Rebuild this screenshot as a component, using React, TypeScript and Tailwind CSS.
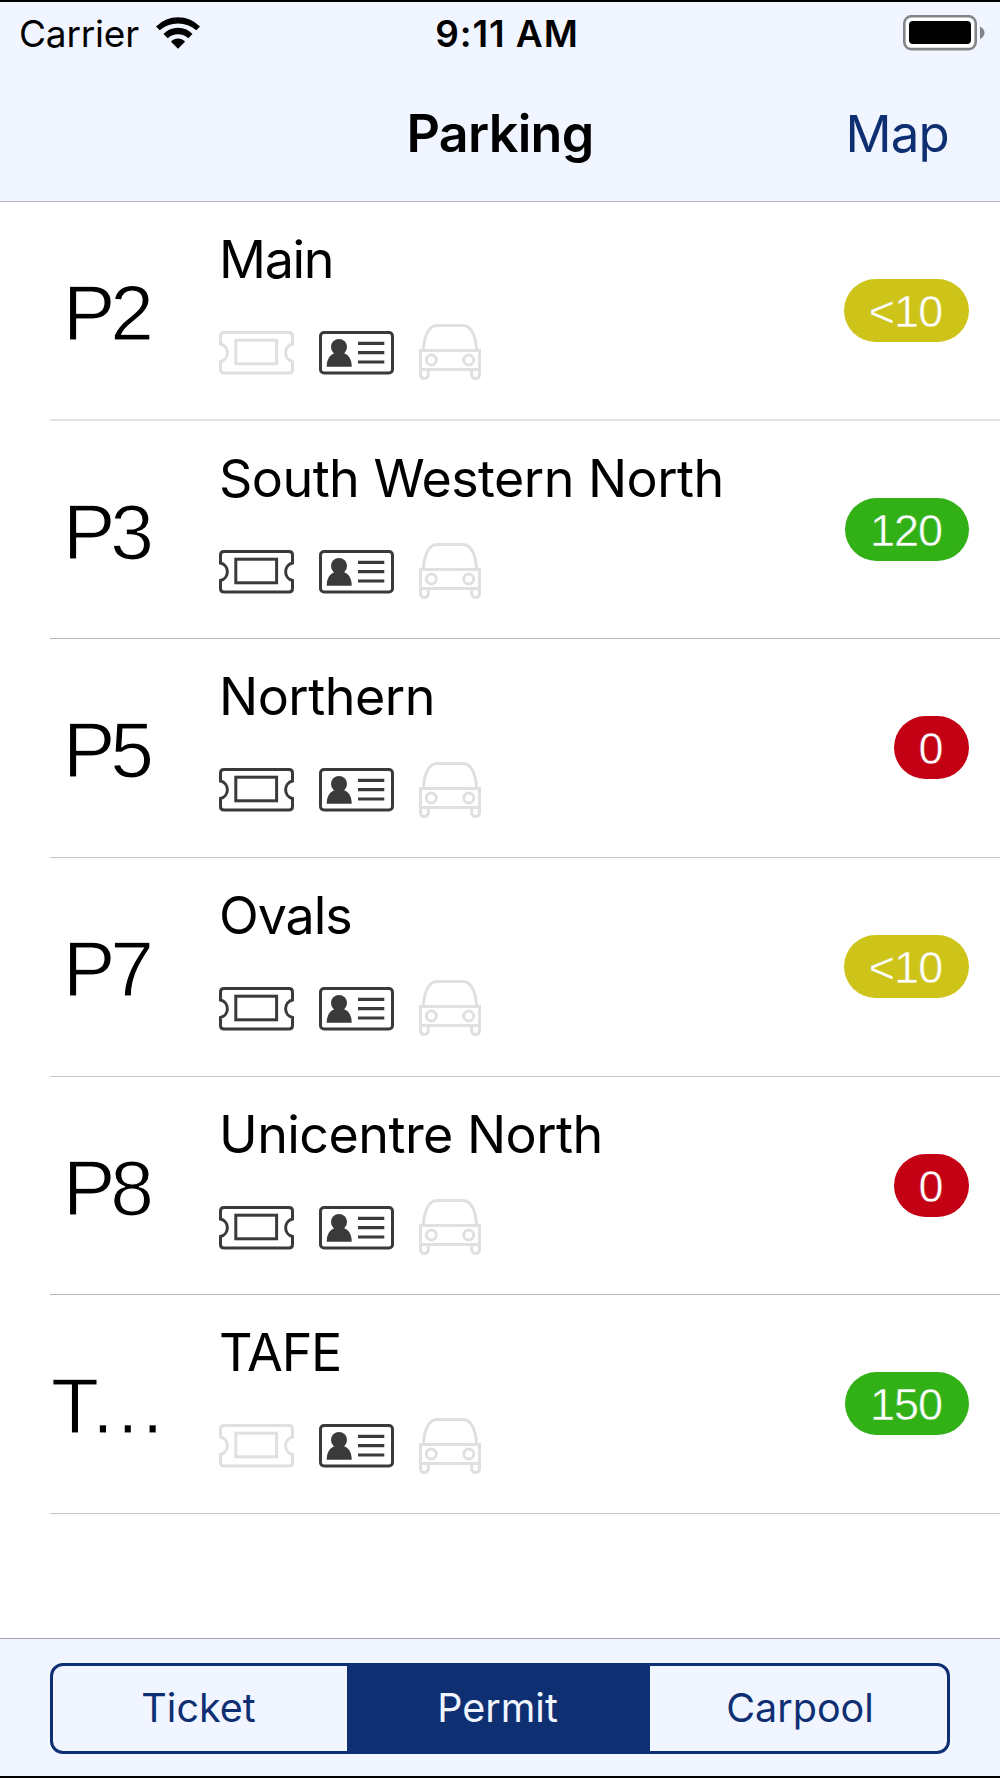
type Lot = {
  code: string;
  codeClass: string;
  name: string;
  nameClass: string;
  ticket: boolean;
  spaces: string;
  badgeClass: string;
  lineClass: string;
};

const YELLOW = "w-[125px] bg-[#cec318] [-webkit-text-stroke:0.5px_#cec318]";
const GREEN = "w-[124px] bg-[#32b117] [-webkit-text-stroke:0.5px_#32b117]";
const RED = "w-[75px] bg-[#c40014] [-webkit-text-stroke:0.5px_#c40014]";

const CENTERED = "pr-[3px] text-center tracking-[-5px]";
const CLIPPED = "pl-px text-left tracking-[-10.5px]";

const SOFT = "border-b-2 border-[#e2e2e3]";
const FINE = "border-b border-[#c6c6ca]";
const STRONG = "border-b border-[#b4b4b9]";

const lots: Lot[] = [
  { code: "P2", codeClass: CENTERED, name: "Main", nameClass: "tracking-[-1.3px]", ticket: false, spaces: "<10", badgeClass: YELLOW, lineClass: SOFT },
  { code: "P3", codeClass: CENTERED, name: "South Western North", nameClass: "tracking-[-0.55px]", ticket: true, spaces: "120", badgeClass: GREEN, lineClass: STRONG },
  { code: "P5", codeClass: CENTERED, name: "Northern", nameClass: "tracking-[-0.5px]", ticket: true, spaces: "0", badgeClass: RED, lineClass: FINE },
  { code: "P7", codeClass: CENTERED, name: "Ovals", nameClass: "tracking-[-1.1px]", ticket: true, spaces: "<10", badgeClass: YELLOW, lineClass: FINE },
  { code: "P8", codeClass: CENTERED, name: "Unicentre North", nameClass: "tracking-[-0.55px]", ticket: true, spaces: "0", badgeClass: RED, lineClass: STRONG },
  { code: "T…", codeClass: CLIPPED, name: "TAFE", nameClass: "tracking-[-1.2px]", ticket: false, spaces: "150", badgeClass: GREEN, lineClass: FINE },
];

function TicketIcon({ active }: { active: boolean }) {
  return (
    <svg width="75" height="44" viewBox="0 0 75 44" fill="none" strokeWidth="3" className={active ? "stroke-[#3a3a3a]" : "stroke-[#e0e0e0]"}>
      <path d="M1.5 13V5Q1.5 1.5 5 1.5H70Q73.500 1.500 73.500 5V13A9 9 0 0 0 73.500 30.500V38.500Q73.500 42 70 42H5Q1.500 42 1.500 38.500V30.500A9 9 0 0 0 1.500 13Z" />
      <rect x="16.800" y="9.200" width="40.800" height="23.600" />
    </svg>
  );
}

function PermitIcon() {
  return (
    <svg width="75" height="44" viewBox="0 0 75 44" fill="none">
      <rect x="1.500" y="1.500" width="72" height="40.500" rx="3.500" stroke="#3a3a3a" strokeWidth="3" />
      <circle cx="20" cy="16" r="8" fill="#3a3a3a" />
      <path d="M7.700 35.700C7.700 28 11 23.500 16 22H24.500C29.500 23.500 32.700 28 32.700 35.700Z" fill="#3a3a3a" />
      <path d="M39 12.300H65.300M39 21.700H65.300M39 31H65.300" stroke="#3a3a3a" strokeWidth="3.200" />
    </svg>
  );
}

function CarIcon() {
  return (
    <svg width="62" height="57" viewBox="0 0 62 57" fill="none" stroke="#e0e0e0" strokeWidth="3">
      <path d="M4.300 26.500C5 15 8.500 1.500 18 1.500H44C53.500 1.500 57 15 57.700 26.500" />
      <rect x="1.500" y="26.500" width="59" height="19" />
      <circle cx="12.300" cy="36" r="5" />
      <circle cx="49.700" cy="36" r="5" />
      <path d="M1.500 45.500V51.300A4 4 0 0 0 9.300 51.300V45.500M52.700 45.500V51.300A4 4 0 0 0 60.500 51.300V45.500" />
    </svg>
  );
}

function WifiIcon() {
  return (
    <svg width="44" height="32" viewBox="0 0 44 32" fill="#000" className="mb-[2px]">
      <path d="M0 9.500Q9.500 .3 22 .3T44 9.500L40.300 13.200Q32.500 6.500 22 6.500T3.700 13.200Z" />
      <path d="M7.500 17Q13.500 10.800 22 10.800T36.500 17L32.300 21.300Q28 17.200 22 17.200T11.700 21.300Z" />
      <path d="M15 24.800Q18 21.500 22 21.500T29 24.800L22 31.800Z" />
    </svg>
  );
}

function BatteryIcon() {
  return (
    <svg width="82" height="36" viewBox="0 0 82 36" className="mb-[2px]">
      <rect x="1.300" y="1.300" width="71.400" height="32.800" rx="7" fill="#fff" stroke="#828588" strokeWidth="2.600" />
      <rect x="6" y="6" width="62" height="23" rx="4" fill="#000" />
      <path d="M77 11.500Q81.500 14 81.500 17.800T77 24Z" fill="#828588" />
    </svg>
  );
}

function LotRow({ lot }: { lot: Lot }) {
  return (
    <li className="flex h-[218.67px] pl-[50px]">
      <div className={"flex flex-1 " + lot.lineClass}>
        <div
          className={
            "mt-[66px] h-[90px] w-[115px] whitespace-nowrap font-['Liberation_Sans',sans-serif] text-[78.500px] leading-[90px] [-webkit-text-stroke:1.2px_white] " +
            lot.codeClass
          }
        >
          {lot.code}
        </div>
        <div className="ml-[54px] mt-[28px] flex flex-1 flex-col">
          <div className={"h-[60px] whitespace-nowrap text-[52px] leading-[60px] " + lot.nameClass}>{lot.name}</div>
          <div className="mt-[34.400px] flex h-[57px] items-center gap-[25px]">
            <TicketIcon active={lot.ticket} />
            <PermitIcon />
            <CarIcon />
          </div>
        </div>
        <div
          className={
            "mr-[31px] mt-[77px] h-[63px] rounded-full pr-[2px] text-center font-['Liberation_Sans',sans-serif] text-[45px] leading-[66px] tracking-[-1px] text-white " +
            lot.badgeClass
          }
        >
          {lot.spaces}
        </div>
      </div>
    </li>
  );
}

export default function App() {
  return (
    <div className="flex h-[1778px] w-[1000px] flex-col overflow-hidden border-y-2 border-black bg-white font-['Inter',sans-serif] text-black">
      <header className="flex h-[200px] shrink-0 flex-col border-b border-[#b4b8bd] bg-[#f0f5ff]">
        <div className="grid h-[64px] grid-cols-3 pl-[19px] pr-[15px] text-[37px] leading-[64px]">
          <div className="flex items-center gap-[17px]">
            <span className="tracking-[-0.2px]">Carrier</span>
            <WifiIcon />
          </div>
          <div className="pl-[10px] text-center font-semibold tracking-[0.9px]">9:11 AM</div>
          <div className="flex items-center justify-end">
            <BatteryIcon />
          </div>
        </div>
        <div className="grid flex-1 grid-cols-3 items-start pt-[32px]">
          <div />
          <h1 className="text-center text-[52px] font-semibold leading-[72px] tracking-[-0.7px]">Parking</h1>
          <button className="justify-self-end pr-[51px] text-[51px] leading-[71px] tracking-[-0.8px] text-[#0f2f73]">Map</button>
        </div>
      </header>
      <ul className="flex-1">
        {lots.map((lot) => (
          <LotRow key={lot.code} lot={lot} />
        ))}
      </ul>
      <footer className="h-[138px] shrink-0 border-t border-[#a5a8ab] bg-[#f0f5ff] px-[50px] pt-[24px]">
        <div className="flex h-[91px] overflow-hidden rounded-[13px] border-[3px] border-[#0f2f73] text-[39.500px] text-[#0f2f73]">
          <button className="w-[294px] pr-[3px]">Ticket</button>
          <button className="w-[303px] bg-[#0f2f73] pr-[2px] text-[#f0f5ff]">Permit</button>
          <button className="flex-1 pl-[3px]">Carpool</button>
        </div>
      </footer>
    </div>
  );
}
